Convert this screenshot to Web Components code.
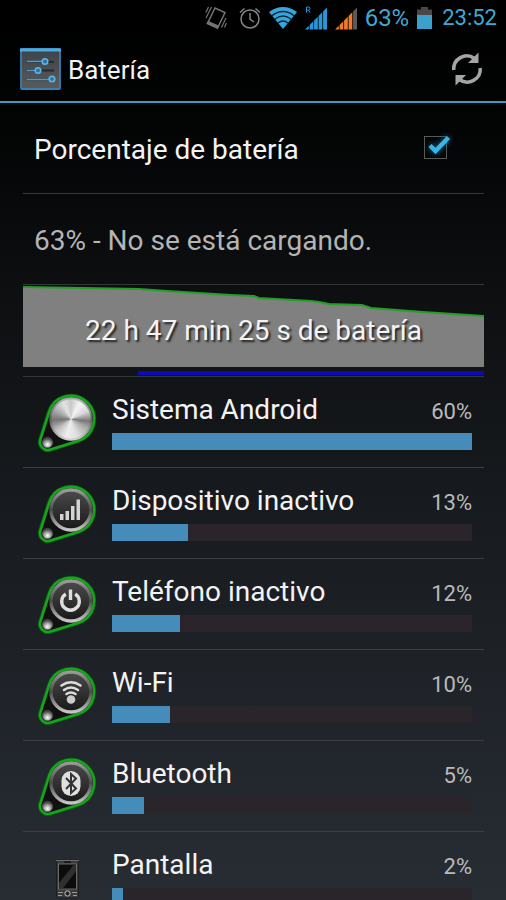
<!DOCTYPE html>
<html lang="es">
<head>
<meta charset="utf-8">
<meta name="viewport" content="width=device-width, initial-scale=1">
<title>Batería</title>
<style>
  body {
    margin: 0;
    height: 100vh;
    overflow: hidden;
    background: linear-gradient(#000 0%, #020303 12%, #0f1113 36%, #1b1f24 66%, #282d34 100%) #000;
    color: #f3f3f3;
    font-family: Roboto, "Noto Sans", sans-serif;
  }
</style>
</head>
<body>
<battery-screen></battery-screen>

<script>
//small helper, attach a shadow root and fill it
const render = (el, css, html) => {
  el.attachShadow({ mode: "open" }).innerHTML = `<style>${css}</style>${html}`;
};

//android status bar
class StatusBar extends HTMLElement {
  connectedCallback() {
    render(this, /*css*/ `
      :host {
        display: flex;
        align-items: center;
        justify-content: flex-end;
        height: 36px;
        padding: 0 9px;
        background: #000;
        color: #3fa9d6;
        font-size: 22px;
        line-height: 36px;
      }
      svg { display: block; flex: none; }
      .icons { display: flex; align-items: center; gap: 8px; margin-right: 8px; }
      .level { font-size: 24px; }
      .battery { margin: 0 10px 0 8px; }
    `, /*html*/ `
      <div class="icons">
        <svg width="26" height="24" viewBox="0 0 26 24" fill="none" stroke="#747474" stroke-width="1.5">
          <path d="M10 2 20 6.500 12.500 22 2.500 17.500Z" />
          <path d="M2.500 17.500 12.500 22 13.300 20.200 3.300 15.700Z" fill="#747474" />
          <path d="M6.500 1 1 12M3.500 1 .8 6.500M16.500 21.500 21 12M19.500 21.500 21.400 17" stroke-width="1.200" />
        </svg>
        <svg width="22" height="24" viewBox="0 0 22 24" fill="none" stroke="#858585" stroke-width="1.5">
          <circle cx="11" cy="13" r="9" />
          <path d="M11 7v6l4 3M1 6.500 5.500 2.500M21 6.500 16.500 2.500" />
        </svg>
        <svg width="28" height="24" viewBox="0 0 28 24">
          <path d="M0 6Q14-4 28 6L14 23Z" fill="#38a5dc" />
          <path d="M2.500 10Q14 1 25.500 10M5.500 13.500Q14 6.500 22.500 13.500M9 17Q14 13 19 17" fill="none" stroke="#032536" stroke-width="1.300" />
        </svg>
        <svg width="22" height="24" viewBox="0 0 22 24" fill="none" stroke="#2797dc">
          <path d="M1.500 6.500V1h2q1.500 0 1.500 1.400T3.500 4h-2M3.500 4 5 6.500" stroke-width="1" />
          <path d="M0 23.500 3.800 19.700v3.800ZM4.600 18.900 8.300 15.200v8.300H4.600ZM9.100 14.400 12.800 10.700v12.800H9.100ZM13.600 9.900 17.300 6.200v17.300h-3.700ZM18.100 5.400 22 1.500v22h-3.900Z" fill="#2797dc" stroke="none" />
        </svg>
        <svg width="22" height="24" viewBox="0 0 22 24">
          <path d="M0 23.500 3.800 19.700v3.800ZM4.600 18.900 8.300 15.200v8.300H4.600ZM9.100 14.400 12.800 10.700v12.800H9.100ZM13.600 9.900 17.300 6.200v17.300h-3.700Z" fill="#f27a2b" />
          <path d="M18.100 5.400 22 1.500v22h-3.900Z" fill="#5b5b5b" />
        </svg>
      </div>
      <span class="level">63%</span>
      <svg class="battery" width="15" height="22" viewBox="0 0 15 22">
        <path d="M0 2.500h4V0h7v2.500h4V8H0Z" fill="#4a4746" />
        <path d="M0 8h15v14H0Z" fill="#39a1cb" />
      </svg>
      <span class="clock">23:52</span>
    `);
  }
}

//title bar with the settings icon and the refresh action
class ActionBar extends HTMLElement {
  connectedCallback() {
    render(this, /*css*/ `
      :host {
        display: flex;
        align-items: center;
        height: 65px;
        padding: 0 22px 0 20px;
        border-bottom: 2px solid #3a9dbd;
      }
      svg { display: block; }
      h1 { flex: 1; margin: 2px 0 0 7px; font-size: 26px; font-weight: 400; line-height: 32px; }
      button { padding: 0; border: 0; background: none; color: #a5a5a5; }
    `, /*html*/ `
      <svg width="41" height="42" viewBox="0 0 41 42">
        <defs>
          <linearGradient id="tile" x1="0" y1="0" x2="0" y2="1">
            <stop offset="0" stop-color="#3c4349" />
            <stop offset="1" stop-color="#5b5a59" />
          </linearGradient>
        </defs>
        <rect x="1" y="1" width="39" height="40" rx="1" fill="url(#tile)" stroke="#3580b5" stroke-width="1.800" />
        <path d="M0 2h41" stroke="#4fabdf" stroke-width="3" />
        <path d="M7 14h27M7 22.500h27M7 31.500h27" stroke="#252b30" stroke-width="2" />
        <path d="M7 13.500h18M7 22.500h11M7 31.500h25" stroke="#419ed6" stroke-width="1.500" />
        <g fill="#2777ae" stroke="#63b5e4" stroke-width="1.500">
          <circle cx="25" cy="13.500" r="2.800" /><circle cx="18" cy="22.500" r="2.800" /><circle cx="32" cy="31" r="2.800" />
        </g>
      </svg>
      <h1><slot></slot></h1>
      <button type="button" aria-label="Actualizar">
        <svg width="34" height="36" viewBox="0 0 34 36" fill="none" stroke="currentColor" stroke-width="3.600">
          <path d="M3.800 19A13 13 0 0 1 24.500 7.500M30.200 17A13 13 0 0 1 9.500 28.500" />
          <path d="M28.500 1.500V12H18ZM5.500 34.500V24H16Z" fill="currentColor" stroke="none" />
        </svg>
      </button>
    `);
  }
}

//one line of the preference list
class PrefRow extends HTMLElement {
  connectedCallback() {
    render(this, /*css*/ `
      :host {
        display: flex;
        align-items: center;
        box-sizing: border-box;
        height: 91px;
        padding: 4px 33px 0 11px;
        border-bottom: 1px solid #34373a;
        font-size: 28px;
        line-height: 36px;
      }
      :host([dim]) { color: #b4b4b4; }
      .label { flex: 1; }
    `, /*html*/ `<div class="label"><slot></slot></div>`);
  }
}

//checkbox with the holo tick
class HoloCheck extends HTMLElement {
  connectedCallback() {
    render(this, /*css*/ `
      :host { display: block; }
      label { display: flex; align-items: flex-start; justify-content: space-between; }
      .box { display: grid; width: 27px; height: 30px; padding-top: 4px; }
      input, svg { grid-area: 1 / 1; }
      input {
        appearance: none;
        box-sizing: border-box;
        width: 23px;
        height: 23px;
        margin: 0;
        border: 1px solid #595959;
      }
      svg { visibility: hidden; pointer-events: none; filter: drop-shadow(0 0 3px #156a91); overflow: visible; }
      input:checked + svg { visibility: visible; }
    `, /*html*/ `
      <label>
        <slot></slot>
        <span class="box">
          <input type="checkbox" checked>
          <svg width="27" height="23" viewBox="0 0 27 23">
            <path d="M6 9.500 11.500 15 24.500 1.500" fill="none" stroke="#35b5e8" stroke-width="4.500" />
          </svg>
        </span>
      </label>
    `);
  }
}

//discharge graph
class BatteryChart extends HTMLElement {
  connectedCallback() {
    const line = "0,2 60,3 116,4 144,6 208,10 231,11 236,13 288,16 296,17 306,19 339,20 348,23 400,27 461,31";
    render(this, /*css*/ `
      :host { display: block; padding-bottom: 1px; border-bottom: 1px solid #34373a; }
      .plot { display: grid; align-items: center; text-align: center; }
      .plot > * { grid-area: 1 / 1; }
      svg { display: block; width: 100%; height: 82px; }
      .time { padding-top: 10px; font-size: 28px; line-height: 36px; text-shadow: 2px 2px 2px #222; }
      .usage { height: 4px; margin: 4px 0 0 25%; background: #0a0cbb; }
    `, /*html*/ `
      <div class="plot">
        <svg viewBox="0 0 461 82" preserveAspectRatio="none">
          <polygon points="${line} 461,82 0,82" fill="#808080" />
          <polyline points="${line}" fill="none" stroke="#20a025" stroke-width="2" />
        </svg>
        <div class="time"><slot></slot></div>
      </div>
      <div class="usage"></div>
    `);
  }
}

//glyphs drawn on the dial, the centre is 33,27
const glyphs = {
  metal: ``,
  signal: `<path d="M22 31h3.500v6H22ZM27.500 28H31v9h-3.500ZM33 23h3.500v14H33ZM38.500 16.500H42V37h-3.500Z" fill="#d4d4d4" />`,
  power: `<path d="M27.800 20A8.800 8.800 0 1 0 37.200 20M32.500 15.500V26" fill="none" stroke="#dedede" stroke-width="3.400" />`,
  wifi: `<path d="M23.500 20.500Q33 14 42.500 20.500M26 25Q33 20 40 25M28.500 29Q33 26 37.500 29" fill="none" stroke="#dedede" stroke-width="2.500" stroke-linecap="round" /><circle cx="33" cy="34.500" r="4.300" fill="#ccc" />`,
  bluetooth: `<rect x="23.500" y="15" width="19" height="25" rx="9.500" fill="#e0e0e0" /><path d="M28 22 38 32.500 33 37V18L38 22.500 28 33" fill="none" stroke="#333" stroke-width="2" />`
};

//teardrop dial with a green rim
class DialIcon extends HTMLElement {
  connectedCallback() {
    const kind = this.getAttribute("kind");
    const metal = kind === "metal";
    const drop = "M2.400 47.600 11.100 20.100A23 23 0 1 1 39.900 48.900L12.400 57.600A8 8 0 0 1 2.400 47.600Z";
    render(this, /*css*/ `
      :host { display: block; }
      svg { display: block; overflow: visible; }
      .shine {
        width: 42px;
        height: 42px;
        border-radius: 50%;
        background: conic-gradient(#c8c8c8, #f4f4f4 8%, #d8d8d8 18%, #777 27%, #aaa 33%, #e0e0e0 45%, #eee 54%, #c4c4c4 64%, #747474 74%, #aaa 83%, #e4e4e4 93%, #c8c8c8);
      }
    `, /*html*/ `
      <svg width="60" height="60" viewBox="0 0 60 60">
        <defs>
          <linearGradient id="ring" x1="0" y1="0" x2="0" y2="1">
            <stop offset="0" stop-color="#9b9b9b" />
            <stop offset=".5" stop-color="#4b4b4b" />
            <stop offset="1" stop-color="#c6c6c6" />
          </linearGradient>
          <linearGradient id="face" x1="0" y1="0" x2="0" y2="1">
            <stop offset="0" stop-color="#4b4b4b" />
            <stop offset="1" stop-color="#181818" />
          </linearGradient>
          <radialGradient id="ball" cx=".5" cy=".7" r=".6">
            <stop offset="0" stop-color="#fff" />
            <stop offset=".5" stop-color="#aaa" />
            <stop offset="1" stop-color="#444" />
          </radialGradient>
        </defs>
        <path d="${drop}" fill="#111" stroke="#0b5a10" stroke-width="4.400" />
        <path d="${drop}" fill="#111" stroke="#18a51e" stroke-width="2.600" />
        <circle cx="33" cy="27" r="20" fill="url(#face)" stroke="url(#ring)" stroke-width="3.400" />
        ${metal ? `<foreignObject x="12" y="6" width="42" height="42"><div class="shine"></div></foreignObject>
          <circle cx="33" cy="27" r="20.500" fill="none" stroke="url(#ring)" stroke-opacity=".6" stroke-width="2" />` : ""}
        <circle cx="9.500" cy="50.500" r="5.200" fill="url(#ball)" stroke="#555" stroke-width=".6" />
        ${glyphs[kind]}
      </svg>
    `);
  }
}

//handset used for the screen entry
class PhoneIcon extends HTMLElement {
  connectedCallback() {
    render(this, /*css*/ `
      :host { display: block; }
      svg { display: block; }
    `, /*html*/ `
      <svg width="60" height="60" viewBox="0 0 60 60">
        <rect x="18.500" y="13" width="22" height="38" rx="1.500" fill="#3a3a3a" stroke="#1c1c1c" />
        <path d="M18 13.500h23" stroke="#6d6d6d" />
        <rect x="20.500" y="17" width="18" height="25" fill="#0c0c0c" stroke="#7b7b7b" stroke-width=".8" />
        <path d="M38 17.500V24L25 41.500h-4V36L36 17.500Z" fill="#2f2f2f" />
        <path d="M26 15h7" stroke="#111" stroke-width="1.500" />
        <path d="M20 45.500h5M34 45.500h5M20 48.500h4M35 48.500h4" stroke="#999" stroke-width="1.200" />
        <circle cx="29.500" cy="46.500" r="2.600" fill="#222" stroke="#c5c5c5" />
      </svg>
    `);
  }
}

//app usage: icon, name, percent and bar
class UsageRow extends HTMLElement {
  connectedCallback() {
    render(this, /*css*/ `
      :host {
        display: grid;
        grid-template-columns: 60px 1fr;
        column-gap: 14px;
        box-sizing: border-box;
        height: 91px;
        padding: 15px 12px 0 15px;
        border-bottom: 1px solid #3c4044;
      }
      .head { display: flex; justify-content: space-between; align-items: baseline; line-height: 36px; }
      .name { font-size: 28px; }
      .percent { color: #b9babb; font-size: 22px; }
      .track { height: 17px; margin-top: 3px; background: #2a242b; }
      .fill { width: ${this.getAttribute("fill")}%; height: 100%; background: #468cba; }
    `, /*html*/ `
      <slot name="icon"></slot>
      <div class="info">
        <div class="head">
          <span class="name"><slot></slot></span>
          <span class="percent">${this.getAttribute("percent")}%</span>
        </div>
        <div class="track"><div class="fill"></div></div>
      </div>
    `);
  }
}

//entries of the list, fill is relative to the biggest one
const apps = [
  { name: "Sistema Android", percent: 60, fill: 100, icon: `<dial-icon slot="icon" kind="metal"></dial-icon>` },
  { name: "Dispositivo inactivo", percent: 13, fill: 21, icon: `<dial-icon slot="icon" kind="signal"></dial-icon>` },
  { name: "Teléfono inactivo", percent: 12, fill: 19, icon: `<dial-icon slot="icon" kind="power"></dial-icon>` },
  { name: "Wi-Fi", percent: 10, fill: 16, icon: `<dial-icon slot="icon" kind="wifi"></dial-icon>` },
  { name: "Bluetooth", percent: 5, fill: 9, icon: `<dial-icon slot="icon" kind="bluetooth"></dial-icon>` },
  { name: "Pantalla", percent: 2, fill: 3, icon: `<phone-icon slot="icon"></phone-icon>` }
];

//whole screen
class BatteryScreen extends HTMLElement {
  connectedCallback() {
    render(this, /*css*/ `
      :host { display: flex; flex-direction: column; height: 100%; }
      main { flex: 1; min-height: 0; padding: 0 22px 0 23px; overflow-y: auto; scrollbar-width: none; }
    `, /*html*/ `
      <status-bar></status-bar>
      <action-bar>Batería</action-bar>
      <main>
        <pref-row><holo-check>Porcentaje de batería</holo-check></pref-row>
        <pref-row dim>63% - No se está cargando.</pref-row>
        <battery-chart>22 h 47 min 25 s de batería</battery-chart>
        ${apps.map(app => `<usage-row percent="${app.percent}" fill="${app.fill}">${app.icon}${app.name}</usage-row>`).join("")}
      </main>
    `);
  }
}

customElements.define("status-bar", StatusBar);
customElements.define("action-bar", ActionBar);
customElements.define("pref-row", PrefRow);
customElements.define("holo-check", HoloCheck);
customElements.define("battery-chart", BatteryChart);
customElements.define("dial-icon", DialIcon);
customElements.define("phone-icon", PhoneIcon);
customElements.define("usage-row", UsageRow);
customElements.define("battery-screen", BatteryScreen);
</script>
</body>
</html>
